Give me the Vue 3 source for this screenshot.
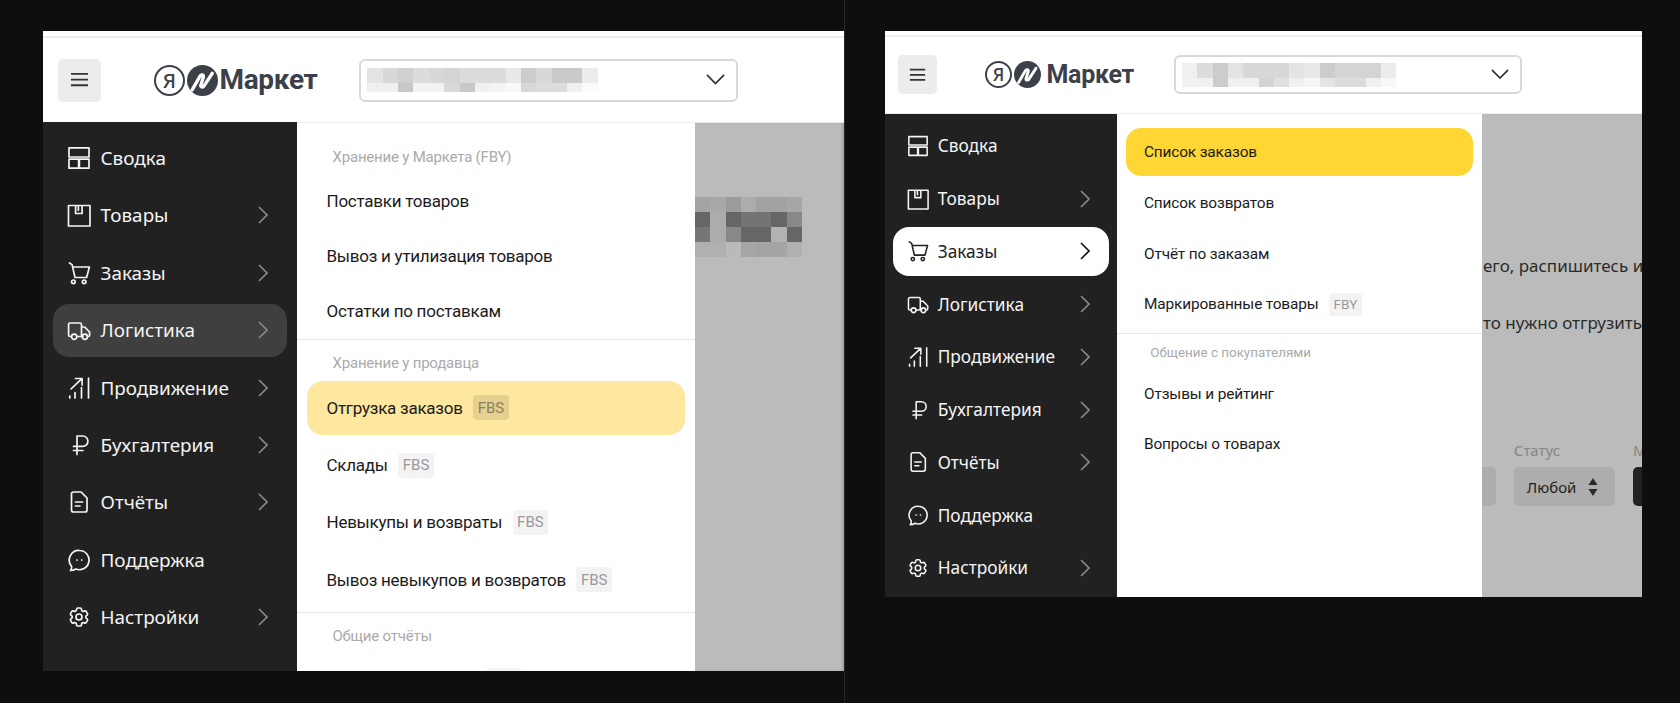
<script setup>
const icons = {
  summary: 'M2 1.8h20v9.2H2zM2 13.2h9.6v9H2zM12.4 13.2H22v9h-9.6z',
  goods: 'M1.5 2.5h21.5v20.5H1.5zM8.6 2.5v8h6.5v-8M11.4 2.5v4.8',
  orders:
    'M2.5 2l2.6 1.6L8 16.5h11.6L22.4 6H5.6M8.2 20.8a1.8 1.8 0 1 1-3.6 0 1.8 1.8 0 0 1 3.6 0zM19 20.8a1.8 1.8 0 1 1-3.6 0 1.8 1.8 0 0 1 3.6 0z',
  delivery:
    'M4 18.5H3.2a1.6 1.6 0 0 1-1.6-1.6V6.6A1.6 1.6 0 0 1 3.2 5h9.7a1.6 1.6 0 0 1 1.6 1.6v11.9H10M14.5 9h3.2l4.9 5.2v3.1a1.2 1.2 0 0 1-1.2 1.2h-.4M16 18.5h-1.5M9.8 18.8a2.6 2.6 0 1 1-5.2 0 2.6 2.6 0 0 1 5.2 0zM20.4 18.8a2.6 2.6 0 1 1-5.2 0 2.6 2.6 0 0 1 5.2 0z',
  promo: 'M21.5 2v20M14.5 11.5V22M8 16.5V22M2.8 20v2M4 13L14.6 2.8M8.5 2.5h6.6V9',
  money: 'M10 21.5V3h5.7a5 5 0 0 1 0 10.4H6.5M6.5 17.5h9.5',
  reports:
    'M4.5 4a2 2 0 0 1 2-2h7.6l5.9 6v12a2 2 0 0 1-2 2H6.5a2 2 0 0 1-2-2zM8.5 12h7M8.5 16h4.5',
  support:
    'M12.5 2.5a9.6 9.6 0 1 1-3.7 18.5c-1.5 1-3.3 1.5-5.3 1.5 1-1.4 1.3-2.9 1-4.3A9.6 9.6 0 0 1 12.5 2.5zM9.8 12h.3M14.6 12h.3',
  settings:
    'M9.594 3.94c.09-.542.56-.94 1.11-.94h2.593c.55 0 1.02.398 1.11.94l.213 1.281c.063.374.313.686.645.87.074.04.147.083.22.127.325.196.72.257 1.075.124l1.217-.456a1.125 1.125 0 0 1 1.37.49l1.296 2.247a1.125 1.125 0 0 1-.26 1.431l-1.003.827c-.293.241-.438.613-.43.992a7.723 7.723 0 0 1 0 .255c-.008.378.137.75.43.991l1.004.827c.424.35.534.955.26 1.43l-1.298 2.247a1.125 1.125 0 0 1-1.369.491l-1.217-.456c-.355-.133-.75-.072-1.076.124a6.47 6.47 0 0 1-.22.128c-.331.183-.581.495-.644.869l-.213 1.281c-.09.543-.56.94-1.11.94h-2.594c-.55 0-1.019-.398-1.11-.94l-.213-1.281c-.062-.374-.312-.686-.644-.87a6.52 6.52 0 0 1-.22-.127c-.325-.196-.72-.257-1.076-.124l-1.217.456a1.125 1.125 0 0 1-1.369-.49l-1.297-2.247a1.125 1.125 0 0 1 .26-1.431l1.004-.827c.292-.24.437-.613.43-.991a6.932 6.932 0 0 1 0-.255c.007-.38-.138-.751-.43-.992l-1.004-.827a1.125 1.125 0 0 1-.26-1.43l1.297-2.247a1.125 1.125 0 0 1 1.37-.491l1.216.456c.356.133.751.072 1.076-.124.072-.044.146-.086.22-.128.332-.183.582-.495.644-.869l.214-1.28ZM15 12a3 3 0 1 1-6 0 3 3 0 0 1 6 0Z',
}

const navItems = [
  { name: 'Сводка', icon: 'summary', arrow: false },
  { name: 'Товары', icon: 'goods', arrow: true },
  { name: 'Заказы', icon: 'orders', arrow: true },
  { name: 'Логистика', icon: 'delivery', arrow: true },
  { name: 'Продвижение', icon: 'promo', arrow: true },
  { name: 'Бухгалтерия', icon: 'money', arrow: true },
  { name: 'Отчёты', icon: 'reports', arrow: true },
  { name: 'Поддержка', icon: 'support', arrow: false },
  { name: 'Настройки', icon: 'settings', arrow: true },
]

const hex = (rows) => rows.map((row) => row.map((v) => `#${v}${v}${v}`))

const frames = [
  {
    id: 'a',
    activeNav: 'Логистика',
    blur: hex([
      ['e4', 'd8', 'd0', 'dc', 'd8', 'd4', 'dc', 'dc', 'dc', 'e8', 'cc', 'd8', 'ca', 'ca', 'ec'],
      ['f0', 'f0', 'c8', 'f2', 'f2', 'd8', 'c8', 'f0', 'f4', 'f8', 'd8', 'dc', 'dc', 'f0', 'fa'],
    ]),
    sections: [
      {
        label: 'Хранение у Маркета (FBY)',
        items: [
          { name: 'Поставки товаров' },
          { name: 'Вывоз и утилизация товаров' },
          { name: 'Остатки по поставкам' },
        ],
      },
      {
        label: 'Хранение у продавца',
        tall: true,
        items: [
          { name: 'Отгрузка заказов', badge: 'FBS', current: true },
          { name: 'Склады', badge: 'FBS' },
          { name: 'Невыкупы и возвраты', badge: 'FBS' },
          { name: 'Вывоз невыкупов и возвратов', badge: 'FBS' },
        ],
      },
      {
        label: 'Общие отчёты',
        tall: true,
        items: [{ name: '', badge: 'FBS', clipped: true }],
      },
    ],
    backdropBlur: hex([
      ['a4', 'a8', '9c', 'ac', 'a2', 'a2', 'a6'],
      ['66', 'ac', '66', '74', '74', '66', '88'],
      ['76', 'ac', '88', '66', '66', 'b2', '66'],
      ['b0', 'b0', 'ba', 'a6', 'a4', 'a4', 'b0'],
    ]),
  },
  {
    id: 'b',
    activeNav: 'Заказы',
    blur: hex([
      ['f0', 'dc', 'cc', 'e4', 'd8', 'd8', 'd8', 'e4', 'e8', 'cc', 'd4', 'd4', 'd4', 'ec'],
      ['f2', 'f0', 'cc', 'f0', 'f0', 'd4', 'e0', 'f0', 'f6', 'e4', 'dc', 'dc', 'f0', 'f8'],
    ]),
    sections: [
      {
        items: [
          { name: 'Список заказов', selected: true },
          { name: 'Список возвратов' },
          { name: 'Отчёт по заказам' },
          { name: 'Маркированные товары', badge: 'FBY' },
        ],
      },
      {
        label: 'Общение с покупателями',
        items: [{ name: 'Отзывы и рейтинг' }, { name: 'Вопросы о товарах' }],
      },
    ],
  },
]
</script>

<template>
  <div class="page">
    <section
      v-for="frame in frames"
      :key="frame.id"
      class="frame"
      :class="`frame--${frame.id}`"
    >
      <div class="window">
        <header class="topbar">
          <button class="burger" type="button" aria-label="Меню">
            <svg viewBox="0 0 20 16" fill="none" stroke="#333" stroke-width="2">
              <path d="M1 2h18M1 8h18M1 14h18" />
            </svg>
          </button>

          <div class="logo">
            <span class="logo__ya">Я</span>
            <span class="logo__mark">
              <svg viewBox="0 0 30 30" fill="none" stroke="#fff" stroke-width="3.2" stroke-linecap="round" stroke-linejoin="round">
                <path d="M5 24 12.5 11c1.4-2.4 4-1.5 3.3.8L13.5 19c-.7 2.4 1.8 3.2 3.2.9L24.5 8" />
              </svg>
            </span>
            <span class="logo__text">Маркет</span>
          </div>

          <div class="shop-select">
            <div class="blur">
              <div v-for="(row, r) in frame.blur" :key="r" class="blur__row">
                <span
                  v-for="(color, c) in row"
                  :key="c"
                  class="blur__cell"
                  :style="{ background: color }"
                ></span>
              </div>
            </div>
            <svg class="shop-select__arrow" viewBox="0 0 20 12" fill="none" stroke="#333" stroke-width="1.8">
              <path d="M1 1l9 9 9-9" />
            </svg>
          </div>
        </header>

        <div class="body">
          <nav class="sidebar">
            <a
              v-for="item in navItems"
              :key="item.name"
              class="nav-item"
              :class="{
                'nav-item--hover': frame.id === 'a' && item.name === frame.activeNav,
                'nav-item--open': frame.id === 'b' && item.name === frame.activeNav,
              }"
            >
              <svg
                class="nav-item__icon"
                viewBox="0 0 24 24"
                fill="none"
                stroke="currentColor"
                stroke-width="1.7"
                stroke-linejoin="round"
                stroke-linecap="round"
              >
                <path :d="icons[item.icon]" />
              </svg>
              <span class="nav-item__name">{{ item.name }}</span>
              <svg
                v-if="item.arrow"
                class="nav-item__chevron"
                viewBox="0 0 10 18"
                fill="none"
                stroke="currentColor"
                stroke-width="1.6"
              >
                <path d="M1 1l8 8-8 8" />
              </svg>
            </a>
          </nav>

          <aside class="submenu">
            <div
              v-for="(section, s) in frame.sections"
              :key="s"
              class="submenu__section"
              :class="{ 'submenu__section--tall': section.tall }"
            >
              <div v-if="section.label" class="submenu__label">{{ section.label }}</div>
              <a
                v-for="item in section.items"
                :key="item.name"
                class="submenu__item"
                :class="{
                  'submenu__item--current': item.current,
                  'submenu__item--selected': item.selected,
                  'submenu__item--clipped': item.clipped,
                }"
              >
                <span v-if="item.name">{{ item.name }}</span>
                <span v-if="item.badge" class="submenu__badge">{{ item.badge }}</span>
              </a>
            </div>
          </aside>

          <div class="backdrop">
            <div v-if="frame.backdropBlur" class="backdrop__blur">
              <div v-for="(row, r) in frame.backdropBlur" :key="r" class="blur__row">
                <span
                  v-for="(color, c) in row"
                  :key="c"
                  class="backdrop__cell"
                  :style="{ background: color }"
                ></span>
              </div>
            </div>

            <template v-else>
              <p class="backdrop__line">его, распишитесь и</p>
              <p class="backdrop__line backdrop__line--next">то нужно отгрузить</p>
              <div class="filters">
                <span></span>
                <span class="filters__label">Статус</span>
                <span class="filters__label">М</span>
                <span class="filters__stub"></span>
                <span class="filters__select">
                  Любой
                  <svg viewBox="0 0 10 18" fill="#2a2a2a"><path d="M5 0l4.5 7h-9zM5 18L.5 11h9z" /></svg>
                </span>
                <span class="filters__dark"></span>
              </div>
            </template>
          </div>
        </div>
      </div>
    </section>
  </div>
</template>

<style scoped>
.page {
  display: flex;
  width: 1680px;
  height: 703px;
  overflow: hidden;
  background: #0e0e0e;
  font-family: 'Noto Sans', Roboto, sans-serif;
}

.frame {
  box-sizing: border-box;
  height: 100%;
}

.frame--a {
  --top-gap: 5px;
  --topbar-h: 84px;
  --topbar-pb: 0px;
  --burger: 43px;
  --burger-icon: 19px;
  --topbar-pl: 14.5px;
  --logo-ml: 53.5px;
  --logo-size: 31px;
  --logo-font: 28px;
  --logo-track: -0.35px;
  --logo-gap: 2px;
  --select-ml: 42px;
  --select-w: 379px;
  --select-h: 43px;
  --arrow-w: 19px;
  --side-w: 254px;
  --side-pt: 9.5px;
  --nav-gap: 4.4px;
  --nav-h: 53px;
  --nav-mx: 10px;
  --nav-font: 18.9px;
  --icon: 24px;
  --icon-gap: 9.5px;
  --sub-w: 398px;
  --sub-font: 17px;
  --sub-track: -0.25px;
  --label-font: 15px;
  --label-track: -0.2px;
  --badge-font: 15px;
  --badge-h: 25px;
  --blur-cell: 15.35px;

  flex: none;
  width: 845px;
  padding: 31px 0 0 43px;
  border-right: 1px solid #262626;
}

.frame--b {
  --top-gap: 4px;
  --topbar-h: 75px;
  --topbar-pb: 1px;
  --burger: 39px;
  --burger-icon: 17px;
  --topbar-pl: 13.5px;
  --logo-ml: 48px;
  --logo-size: 27px;
  --logo-font: 25px;
  --logo-track: -0.3px;
  --logo-gap: 6px;
  --select-ml: 40px;
  --select-w: 348px;
  --select-h: 39px;
  --arrow-w: 18px;
  --side-w: 232.8px;
  --side-pt: 7.65px;
  --nav-gap: 4.05px;
  --nav-h: 48.7px;
  --nav-mx: 8.5px;
  --nav-font: 17.3px;
  --icon: 22px;
  --icon-gap: 8.7px;
  --sub-w: 364.7px;
  --sub-font: 15.4px;
  --sub-track: -0.15px;
  --label-font: 13.4px;
  --label-track: 0px;
  --badge-font: 13.6px;
  --badge-h: 23px;
  --blur-cell: 15.3px;

  flex: none;
  width: 797px;
  padding: 31px 0 0 39.5px;
}

.window {
  box-sizing: border-box;
  display: flex;
  flex-direction: column;
  overflow: hidden;
  padding-top: var(--top-gap);
  background: #fff;
}

.frame--a .window {
  width: 801px;
  height: 639.5px;
}

.frame--b .window {
  width: 757.5px;
  height: 566px;
}

.topbar {
  box-sizing: content-box;
  display: flex;
  flex: none;
  align-items: center;
  height: var(--topbar-h);
  padding-left: var(--topbar-pl);
  padding-bottom: var(--topbar-pb);
  border-top: 2px solid #ececec;
}

.burger {
  display: flex;
  flex: none;
  align-items: center;
  justify-content: center;
  width: var(--burger);
  height: var(--burger);
  padding: 0;
  border: 0;
  border-radius: 5px;
  background: #ececec;
}

.burger svg {
  width: var(--burger-icon);
}

.logo {
  display: flex;
  flex: none;
  align-items: center;
  margin-left: var(--logo-ml);
  color: #3c4049;
}

.logo__ya {
  box-sizing: border-box;
  display: flex;
  align-items: center;
  justify-content: center;
  width: var(--logo-size);
  height: var(--logo-size);
  border: 2.6px solid #3c4049;
  border-radius: 50%;
  font-size: calc(var(--logo-size) * 0.66);
  font-weight: 500;
  line-height: 1;
}

.logo__mark {
  display: block;
  width: var(--logo-size);
  height: var(--logo-size);
  margin-left: 1.5px;
  border-radius: 50%;
  background: #3c4049;
}

.logo__mark svg {
  display: block;
  width: 100%;
  height: 100%;
}

.logo__text {
  margin-left: var(--logo-gap);
  font-family: Roboto, 'Noto Sans', sans-serif;
  font-size: var(--logo-font);
  font-weight: 700;
  line-height: 1;
  letter-spacing: var(--logo-track);
}

.shop-select {
  box-sizing: border-box;
  display: flex;
  flex: none;
  align-items: center;
  justify-content: space-between;
  width: var(--select-w);
  height: var(--select-h);
  margin-left: var(--select-ml);
  padding: 0 11px 0 6px;
  border: 2px solid #d9d9d9;
  border-radius: 6px;
}

.shop-select__arrow {
  width: var(--arrow-w);
}

.blur__row {
  display: flex;
}

.blur__row:first-child .blur__cell {
  height: 15px;
}

.blur__cell {
  width: var(--blur-cell);
  height: 9px;
}

.body {
  display: flex;
  flex: 1;
  min-height: 0;
  border-top: 1px solid #ececec;
}

.sidebar {
  box-sizing: border-box;
  display: flex;
  flex: none;
  flex-direction: column;
  gap: var(--nav-gap);
  width: var(--side-w);
  padding-top: var(--side-pt);
  background: #212121;
}

.frame--a .sidebar {
  margin-top: -1px;
}

.nav-item {
  box-sizing: border-box;
  display: flex;
  flex: none;
  align-items: center;
  height: var(--nav-h);
  margin-inline: var(--nav-mx);
  padding: 0 19px 0 14px;
  border-radius: 16px;
  color: #f4f4f4;
  font-size: var(--nav-font);
}

.nav-item--hover {
  background: #3f3f3f;
}

.nav-item--open {
  background: #fff;
  color: #222;
}

.nav-item__icon {
  flex: none;
  width: var(--icon);
  height: var(--icon);
}

.nav-item__name {
  flex: 1;
  margin-left: var(--icon-gap);
}

.nav-item__chevron {
  flex: none;
  width: 10px;
  height: 18px;
  color: #8a8a8a;
}

.nav-item--open .nav-item__chevron {
  color: #111;
}

.submenu {
  box-sizing: border-box;
  flex: none;
  width: var(--sub-w);
  overflow: hidden;
  background: #fff;
  color: #1b1b1b;
  font-family: Roboto, 'Noto Sans', sans-serif;
}

.submenu__section {
  border-bottom: 1px solid #e6e6e6;
}

.submenu__section:last-child {
  border-bottom: 0;
}

.submenu__label {
  display: flex;
  align-items: center;
  color: #aaa;
  font-size: var(--label-font);
  letter-spacing: var(--label-track);
}

.submenu__item {
  box-sizing: border-box;
  display: flex;
  align-items: center;
  font-size: var(--sub-font);
  letter-spacing: var(--sub-track);
}

.submenu__badge {
  display: flex;
  align-items: center;
  height: var(--badge-h);
  margin-left: 10.5px;
  padding: 0 4.5px;
  border-radius: 4px;
  background: #f3f3f3;
  color: #9a9a9a;
  font-size: var(--badge-font);
  letter-spacing: 0;
}

.submenu__item--clipped .submenu__badge {
  margin-left: 159px;
}

.frame--a .submenu__section {
  padding: 20px 0 0.5px;
}

.frame--a .submenu__section--tall {
  padding: 9px 0 3px;
}

.frame--a .submenu__label {
  height: 28px;
  margin-left: 35.5px;
}

.frame--a .submenu__label + .submenu__item {
  margin-top: 2.5px;
}

.frame--a .submenu__section--tall .submenu__label + .submenu__item {
  margin-top: 2.3px;
}

.frame--a .submenu__item {
  height: 55px;
  margin-inline: 10px;
  padding-left: 19.5px;
}

.frame--a .submenu__section--tall .submenu__item {
  height: 57.4px;
}

.frame--b .submenu__section {
  padding: 12.7px 0 2.7px;
}

.frame--b .submenu__section + .submenu__section {
  padding-top: 7px;
}

.frame--b .submenu__label {
  height: 24px;
  margin-left: 33px;
}

.frame--b .submenu__label + .submenu__item {
  margin-top: 3.6px;
}

.frame--b .submenu__item {
  height: 50.8px;
  margin-inline: 9px;
  padding-left: 17.7px;
}

.frame--a .submenu__section--tall .submenu__label + .submenu__item--current {
  height: 54.4px;
  margin-block: 3.5px 1.5px;
  border-radius: 16px;
  background: #fee79e;
}

.submenu__item--current .submenu__badge {
  background: #e6d08e;
  color: #8b8160;
}

.frame--b .submenu__item--selected {
  height: 48px;
  margin-block: 1.4px;
  border-radius: 15px;
  background: #ffd633;
}

.backdrop {
  flex: 1;
  min-width: 0;
  overflow: hidden;
  background: #bbb;
  color: #2b2b2b;
}

.frame--a .backdrop {
  box-shadow: inset -2px 0 2px rgb(0 0 0 / 0.12);
}

.backdrop__blur {
  margin-top: 73.5px;
}

.backdrop__blur .blur__row {
  height: 15.2px;
}

.backdrop__cell {
  width: 15.3px;
  height: 100%;
}

.backdrop__line {
  margin: 139px 0 0 1px;
  font-size: 17px;
  line-height: 26px;
  white-space: nowrap;
}

.backdrop__line--next {
  margin-top: 31px;
}

.filters {
  display: grid;
  grid-template-columns: 14px 101.5px 40px;
  grid-template-rows: 24px 39px;
  column-gap: 17.8px;
  row-gap: 5px;
  margin-top: 102px;
}

.filters__label {
  display: flex;
  align-items: center;
  color: #868686;
  font-size: 15px;
  white-space: nowrap;
}

.filters__stub {
  border-radius: 0 5px 5px 0;
  background: #adadad;
}

.filters__select {
  display: flex;
  align-items: center;
  gap: 12px;
  padding-left: 13px;
  border-radius: 5px;
  background: #adadad;
  color: #1f1f1f;
  font-size: 15px;
}

.filters__select svg {
  width: 10px;
  height: 18px;
}

.filters__dark {
  border-radius: 5px 0 0 5px;
  background: #222;
}
</style>

<style>
html,
body {
  margin: 0;
  background: #0e0e0e;
}
</style>
